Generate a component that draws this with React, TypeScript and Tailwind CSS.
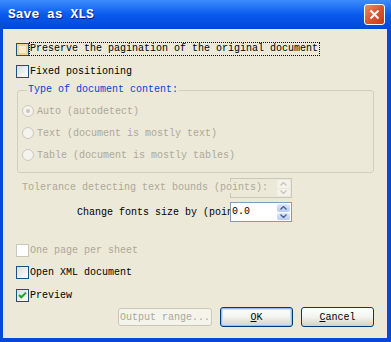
import React from "react";

const mono = { fontFamily: '"Liberation Mono", "DejaVu Sans Mono", monospace' };

const CheckBox: React.FC<{ checked?: boolean; disabled?: boolean; hover?: boolean }> = ({ checked, disabled, hover }) => (
  <div
    className={
      "w-[13px] h-[13px] border flex items-center justify-center shrink-0 " +
      (disabled
        ? "border-[#cac8bb] bg-white"
        : hover
        ? "border-[#1c5180] bg-[#f6ecd0] shadow-[inset_0_0_0_2px_#f7d58f]"
        : "border-[#1c5180] bg-gradient-to-br from-[#dcdcd7] to-white")
    }
  >
    {checked && (
      <svg width="9" height="9" viewBox="0 0 9 9">
        <path d="M1 4 L3.3 6.3 L8 1.6" fill="none" stroke="#21a121" strokeWidth="2" />
      </svg>
    )}
  </div>
);

const Radio: React.FC<{ checked?: boolean }> = ({ checked }) => (
  <div className="w-[12px] h-[12px] rounded-full border border-[#cac8bb] bg-[#f4f3ee] flex items-center justify-center shrink-0">
    {checked && <div className="w-[4px] h-[4px] rounded-full bg-[#cac8bb]" />}
  </div>
);

const SpinBox: React.FC<{ value?: string; disabled?: boolean }> = ({ value, disabled }) => (
  <div
    className={
      "w-[62px] h-[20px] border flex items-stretch " +
      (disabled ? "border-[#c9c7ba] bg-[#ece9d8]" : "border-[#7f9db9] bg-white")
    }
  >
    <div className="flex-1 text-[10px] leading-[18px] pl-[1px] text-black">{value}</div>
    <div className="w-[15px] flex flex-col gap-[1px] p-[1px]">
      {[0, 1].map((i) => (
        <div
          key={i}
          className={
            "flex-1 rounded-[2px] flex items-center justify-center " +
            (disabled ? "bg-[#f3f2ec]" : "bg-gradient-to-b from-[#dfe8fd] to-[#b6cbf9]")
          }
        >
          <svg width="7" height="4" viewBox="0 0 7 4">
            <path
              d={i === 0 ? "M0.5 3.5 L3.5 0.5 L6.5 3.5" : "M0.5 0.5 L3.5 3.5 L6.5 0.5"}
              fill="none"
              stroke={disabled ? "#c9c7ba" : "#4d6185"}
              strokeWidth="1.4"
            />
          </svg>
        </div>
      ))}
    </div>
  </div>
);

const Btn: React.FC<{ children: React.ReactNode; w: string; disabled?: boolean; def?: boolean; h?: string }> = ({
  children,
  w,
  disabled,
  def,
  h,
}) => (
  <div
    className={
      "rounded-[3px] border flex items-center justify-center text-[10px] " +
      w +
      " " +
      (h || "h-[20px]") +
      " " +
      (disabled
        ? "border-[#c9c7ba] bg-[#f5f4ea] text-[#aca899]"
        : "border-[#003c74] bg-gradient-to-b from-white via-[#f3f3ee] to-[#d6d0c5] text-black") +
      (def ? " shadow-[inset_0_0_0_1px_#9dbaf2,inset_0_0_0_2px_#cedcf8]" : "")
    }
  >
    {children}
  </div>
);

export default function App() {
  return (
    <div className="w-[391px] h-[342px] flex flex-col bg-[#0a46d8]" style={mono}>
      {/* title bar */}
      <div className="h-[29px] flex items-center pl-[8px] pr-[6px] bg-gradient-to-b from-[#3c8cfc] via-[#0a5aee] to-[#0148d8]">
        <span className="flex-1 text-white font-bold text-[13px] [text-shadow:1px_1px_0_#0a1e8c]">Save as XLS</span>
        <div className="w-[21px] h-[21px] rounded-[3px] border border-white bg-gradient-to-br from-[#e88d6c] via-[#d8572d] to-[#c23c16] flex items-center justify-center">
          <svg width="11" height="11" viewBox="0 0 11 11">
            <path d="M1.5 1.5 L9.5 9.5 M9.5 1.5 L1.5 9.5" stroke="white" strokeWidth="2" />
          </svg>
        </div>
      </div>

      {/* body */}
      <div className="flex-1 ml-[3px] mr-[4px] mb-[4px] bg-[#ece9d8] flex flex-col pt-[9px] text-[10px] text-black">
        <div className="h-[22px] flex items-center pl-[13px]">
          <CheckBox hover />
          <span className="border border-dotted border-black leading-[12px] pr-[1px]">
            Preserve the pagination of the original document
          </span>
        </div>
        <div className="h-[22px] flex items-center pl-[13px] gap-[1px]">
          <CheckBox />
          <span>Fixed positioning</span>
        </div>

        <fieldset className="mt-[2px] ml-[14px] mr-[13px] border border-[#d0d0bf] rounded-[3px] pt-[4px] pb-[6px]">
          <legend className="ml-[9px] px-[1px] leading-[12px] text-[#0046d5]">Type of document content:</legend>
          {[
            ["Auto (autodetect)", true],
            ["Text (document is mostly text)", false],
            ["Table (document is mostly tables)", false],
          ].map(([t, c]) => (
            <div key={t as string} className="h-[22px] flex items-center pl-[4px] gap-[3px] text-[#aca899]">
              <Radio checked={c as boolean} />
              <span>{t as string}</span>
            </div>
          ))}
        </fieldset>

        <div className="mt-[5px] flex items-center pl-[19px]">
          <div className="w-[208px] whitespace-nowrap relative z-10 leading-[12px] text-[#aca899]">
            <span className="bg-[#ece9d8]">Tolerance detecting text bounds (points):</span>
          </div>
          <SpinBox disabled />
        </div>

        <div className="mt-[4px] flex items-center pl-[74px]">
          <div className="w-[153px] whitespace-nowrap overflow-hidden">Change fonts size by (points):</div>
          <SpinBox value="0.0" />
        </div>

        <div className="mt-[17px] h-[22px] flex items-center pl-[13px] gap-[1px] text-[#aca899]">
          <CheckBox disabled />
          <span>One page per sheet</span>
        </div>
        <div className="h-[22px] flex items-center pl-[13px] gap-[1px]">
          <CheckBox />
          <span>Open XML document</span>
        </div>
        <div className="mt-[1px] h-[22px] flex items-center pl-[13px] gap-[1px]">
          <CheckBox checked />
          <span>Preview</span>
        </div>

        <div className="mt-[1px] h-[20px] flex items-center justify-end gap-[8px] pr-[13px]">
          <Btn w="w-[94px]" h="h-[18px]" disabled>
            Output range...
          </Btn>
          <Btn w="w-[73px]" def>
            <span className="underline">O</span>K
          </Btn>
          <Btn w="w-[73px]">
            <span className="underline">C</span>ancel
          </Btn>
        </div>
      </div>
    </div>
  );
}
